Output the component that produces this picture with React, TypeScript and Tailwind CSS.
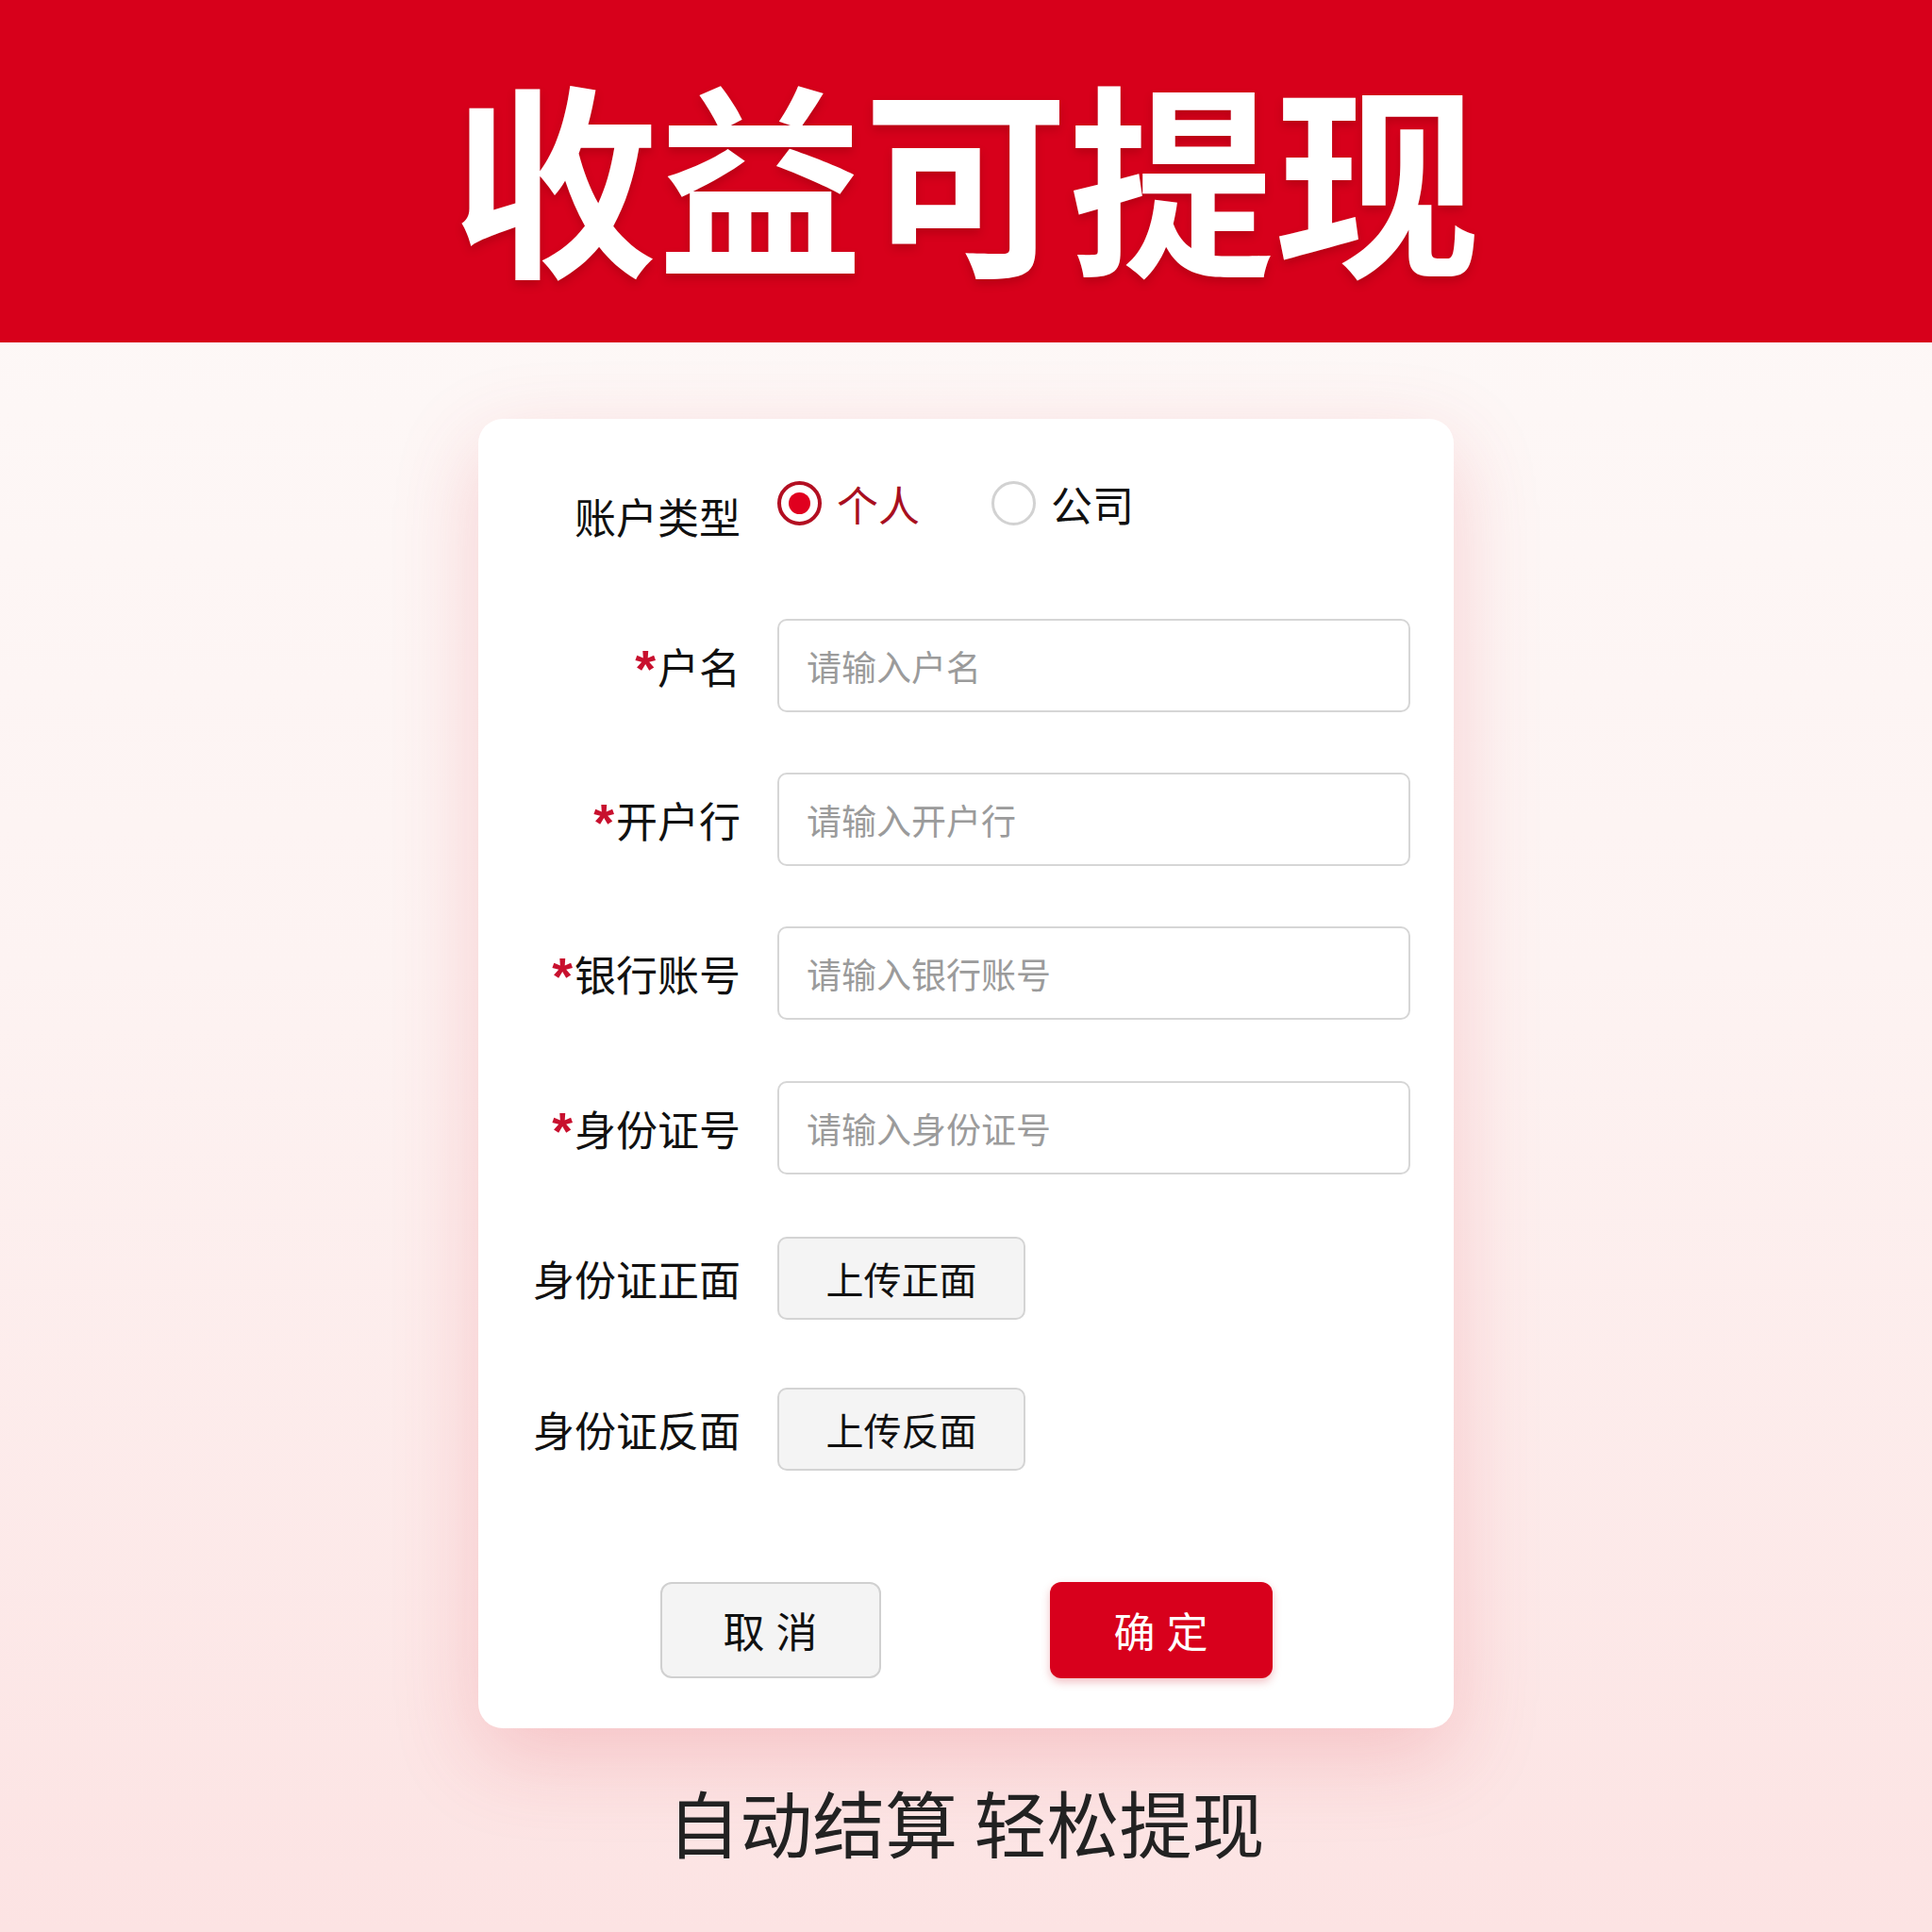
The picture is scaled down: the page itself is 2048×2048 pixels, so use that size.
import { useState } from "react";

const FONT = "font-['Noto_Sans_CJK_SC','Noto_Sans',sans-serif]";

interface FieldRow {
  label: string;
  placeholder: string;
  mt: string;
}

const fields: FieldRow[] = [
  { label: "户名", placeholder: "请输入户名", mt: "mt-[67px]" },
  { label: "开户行", placeholder: "请输入开户行", mt: "mt-[64px]" },
  { label: "银行账号", placeholder: "请输入银行账号", mt: "mt-[64px]" },
  { label: "身份证号", placeholder: "请输入身份证号", mt: "mt-[65px]" },
];

function Radio({ checked, label, onClick }: { checked: boolean; label: string; onClick: () => void }) {
  return (
    <button type="button" onClick={onClick} className="flex items-center gap-[16px]">
      {checked ? (
        <span className="flex h-[47px] w-[47px] items-center justify-center rounded-full border-[4px] border-[#b30f22] bg-white">
          <span className="h-[23px] w-[23px] rounded-full bg-[#e0001f]" />
        </span>
      ) : (
        <span className="h-[47px] w-[47px] rounded-full border-[3px] border-[#d2d2d2] bg-white" />
      )}
      <span className={`text-[44px] leading-none ${checked ? "text-[#a80f20]" : "text-[#111]"}`}>{label}</span>
    </button>
  );
}

export default function App() {
  const [type, setType] = useState<"personal" | "company">("personal");

  return (
    <div className={`${FONT} flex h-[2048px] w-[2048px] flex-col bg-linear-to-b from-[#fdfaf9] via-[#fdf3f2] to-[#fce3e3]`}>
      <header className="flex h-[363px] shrink-0 items-center justify-center bg-[#d7001b]">
        <h1 className="text-[218px] font-bold leading-none text-white [text-shadow:0_5px_10px_rgba(90,0,0,0.25)]">
          收益可提现
        </h1>
      </header>

      <div className="mx-auto mt-[81px] flex h-[1388px] w-[1034px] flex-col rounded-[26px] bg-white px-[46px] pt-[46px] shadow-[0_30px_90px_rgba(225,70,80,0.22)]">
        {/* 账户类型 */}
        <div className="flex h-[99px] items-center gap-[39px]">
          <div className="mt-[14px] w-[232px] text-right text-[44px] leading-none text-[#111]">账户类型</div>
          <div className="mb-[12px] flex items-center gap-[76px]">
            <Radio checked={type === "personal"} label="个人" onClick={() => setType("personal")} />
            <Radio checked={type === "company"} label="公司" onClick={() => setType("company")} />
          </div>
        </div>

        {fields.map((f) => (
          <div key={f.label} className={`${f.mt} flex h-[99px] items-center gap-[39px]`}>
            <label className="w-[232px] text-right text-[44px] leading-none text-[#111]">
              <span className="relative top-[3px] mr-[2px] font-['Liberation_Sans',sans-serif] text-[56px] font-bold text-[#c8102e]">
                *
              </span>
              {f.label}
            </label>
            <input
              type="text"
              placeholder={f.placeholder}
              className="h-full flex-1 rounded-[10px] border-2 border-[#d6d6d6] bg-white px-[29px] text-[37px] text-[#111] placeholder:text-[#9b9b9b] focus:outline-none"
            />
          </div>
        ))}

        <div className="mt-[66px] flex h-[88px] items-center gap-[39px]">
          <div className="w-[232px] text-right text-[44px] leading-none text-[#111]">身份证正面</div>
          <button className="h-full w-[263px] rounded-[10px] border-2 border-[#d4d4d4] bg-[#f4f4f4] text-[40px] text-[#111]">
            上传正面
          </button>
        </div>

        <div className="mt-[72px] flex h-[88px] items-center gap-[39px]">
          <div className="w-[232px] text-right text-[44px] leading-none text-[#111]">身份证反面</div>
          <button className="h-full w-[263px] rounded-[10px] border-2 border-[#d4d4d4] bg-[#f4f4f4] text-[40px] text-[#111]">
            上传反面
          </button>
        </div>

        <div className="mt-[118px] flex justify-center gap-[179px]">
          <button className="h-[102px] w-[234px] rounded-[12px] border-2 border-[#d0d0d0] bg-[#f4f4f4] pl-[12px] text-[44px] tracking-[12px] text-[#111]">
            取消
          </button>
          <button className="h-[102px] w-[236px] rounded-[12px] bg-[#d8001c] pl-[12px] text-[44px] tracking-[12px] text-white shadow-[0_4px_10px_rgba(200,0,20,0.25)]">
            确定
          </button>
        </div>
      </div>

      <p className="mt-[60px] text-center text-[77px] font-normal leading-none text-[#222]">自动结算 轻松提现</p>
    </div>
  );
}
